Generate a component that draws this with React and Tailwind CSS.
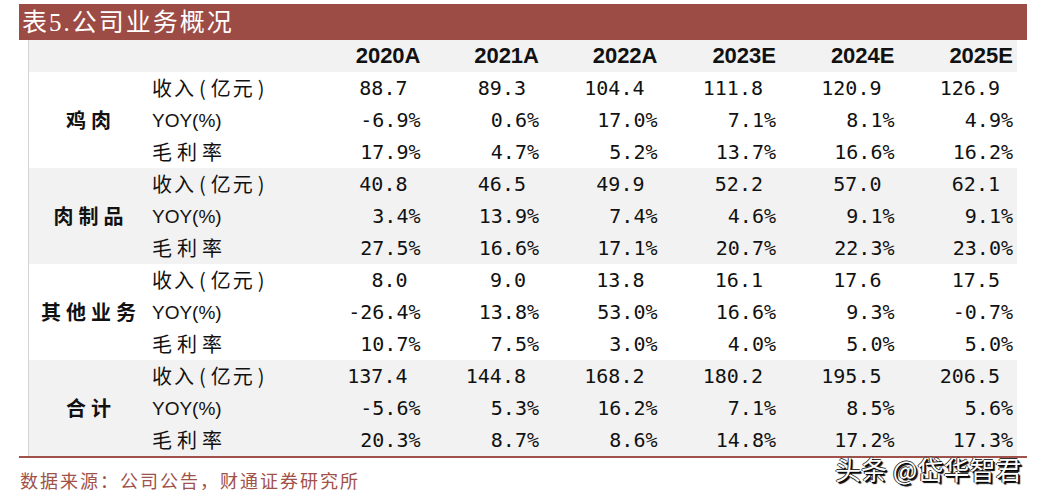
import React from 'react';

const years = ['2020A', '2021A', '2022A', '2023E', '2024E', '2025E'];

const groups = [
  {
    name: '鸡肉',
    bg: 'bg-white',
    rows: [
      ['88.7', '89.3', '104.4', '111.8', '120.9', '126.9'],
      ['-6.9%', '0.6%', '17.0%', '7.1%', '8.1%', '4.9%'],
      ['17.9%', '4.7%', '5.2%', '13.7%', '16.6%', '16.2%'],
    ],
  },
  {
    name: '肉制品',
    bg: 'bg-[#f2f2f2]',
    rows: [
      ['40.8', '46.5', '49.9', '52.2', '57.0', '62.1'],
      ['3.4%', '13.9%', '7.4%', '4.6%', '9.1%', '9.1%'],
      ['27.5%', '16.6%', '17.1%', '20.7%', '22.3%', '23.0%'],
    ],
  },
  {
    name: '其他业务',
    bg: 'bg-white',
    rows: [
      ['8.0', '9.0', '13.8', '16.1', '17.6', '17.5'],
      ['-26.4%', '13.8%', '53.0%', '16.6%', '9.3%', '-0.7%'],
      ['10.7%', '7.5%', '3.0%', '4.0%', '5.0%', '5.0%'],
    ],
  },
  {
    name: '合计',
    bg: 'bg-[#f2f2f2]',
    rows: [
      ['137.4', '144.8', '168.2', '180.2', '195.5', '206.5'],
      ['-5.6%', '5.3%', '16.2%', '7.1%', '8.5%', '5.6%'],
      ['20.3%', '8.7%', '8.6%', '14.8%', '17.2%', '17.3%'],
    ],
  },
];

const cjk = "font-['Noto_Sans_CJK_SC',sans-serif]";
const num = "font-['DejaVu_Sans_Mono','Noto_Sans_CJK_SC',monospace]";

const SubLabel = ({ i }) => {
  if (i === 1) {
    return (
      <span className="font-['Liberation_Sans',sans-serif] text-[19px] text-[#111]">
        YOY(%)
      </span>
    );
  }
  if (i === 0) {
    return (
      <span className={`${cjk} text-[20px] tracking-[2px] text-[#111]`}>
        收入<span className="px-[3px]">(</span>亿元<span className="px-[3px]">)</span>
      </span>
    );
  }
  return (
    <span className={`${cjk} text-[20px] tracking-[5px] text-[#111]`}>
      毛利率
    </span>
  );
};

export default function App() {
  return (
    <div className="relative w-[1040px] h-[494px] bg-white overflow-hidden">
      <div className="pl-[19px] pt-[4px] w-[1027px]">
        {/* title bar */}
        <div className="h-[36px] bg-[#9c4b45] flex items-center pl-[3px]">
          <span className="font-['Liberation_Serif','Noto_Sans_CJK_SC',serif] text-[25px] leading-none tracking-[2px] text-white">
            表5.公司业务概况
          </span>
        </div>

        {/* table */}
        <div className="ml-[9px] w-[989px] border-l border-[#d4d4d4]">
          <div className="flex h-[32px] items-center bg-[#f2f2f2] pr-[4px]">
            <div className="w-[273px]" />
            {years.map((y) => (
              <div
                key={y}
                className="w-[118.5px] text-right font-['Liberation_Sans',sans-serif] font-bold text-[22px] leading-none text-[#111]"
              >
                {y}
              </div>
            ))}
          </div>

          {groups.map((g) => (
            <div key={g.name} className={`flex ${g.bg}`}>
              <div className="w-[119px] flex items-center justify-center">
                <span className={`${cjk} font-bold text-[20px] tracking-[5px] pl-[5px] text-[#111]`}>
                  {g.name}
                </span>
              </div>
              <div className="flex flex-col pr-[4px]">
                {g.rows.map((r, i) => (
                  <div key={i} className="flex h-[32px] items-center">
                    <div className="w-[154px] pl-[4px] leading-none">
                      <SubLabel i={i} />
                    </div>
                    {r.map((v, j) => (
                      <div
                        key={j}
                        className={`w-[118.5px] text-right ${num} text-[20px] leading-none text-[#111] ${
                          v.endsWith('%') ? 'pr-[0px]' : 'pr-[13px]'
                        }`}
                      >
                        {v}
                      </div>
                    ))}
                  </div>
                ))}
              </div>
            </div>
          ))}
        </div>

        {/* bottom rule */}
        <div className="h-[2px] bg-[#a0514a]" />

        {/* source */}
        <div className="pt-[12px] pl-[1px]">
          <span className={`${cjk} text-[18px] leading-none tracking-[2px] text-[#a0514a]`}>
            数据来源：公司公告，财通证券研究所
          </span>
        </div>
      </div>

      {/* watermark */}
      <div className="absolute left-[835px] top-[456px] font-['Noto_Sans_CJK_SC',sans-serif] text-[26px] leading-none text-white [text-shadow:1px_1px_0_#000,-1px_0_0_#333,0_-1px_0_#333,2px_2px_1px_#000]">
        头条 @岱华智君
      </div>
    </div>
  );
}
